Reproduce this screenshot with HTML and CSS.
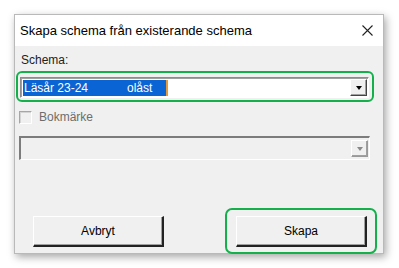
FILE: index.html
```html
<!DOCTYPE html>
<html lang="sv">
<head>
  <meta charset="UTF-8">
  <title>Skapa schema</title>
  <link rel="stylesheet" href="styles.css">
</head>
<body>
  <div class="dialog">
    <div class="titlebar">
      <span class="title">Skapa schema från existerande schema</span>
      <svg class="close" width="11" height="11" viewBox="0 0 11 11">
        <path d="M0.5 0.5 L10.5 10.5 M10.5 0.5 L0.5 10.5" stroke="#222" stroke-width="1.1" fill="none"/>
      </svg>
    </div>
    <div class="content">
      <div class="label">Schema:</div>
      <div class="highlight">
        <div class="combo">
          <span class="selected"><span class="year">Läsår 23-24</span><span>olåst</span></span>
          <span class="drop"><span class="arrow"></span></span>
        </div>
      </div>
      <div class="check-row">
        <span class="checkbox"></span>
        <span class="check-label">Bokmärke</span>
      </div>
      <div class="combo disabled">
        <span class="drop"><span class="arrow"></span></span>
      </div>
      <div class="buttons">
        <div class="btn-wrap"><button class="btn">Avbryt</button></div>
        <div class="btn-wrap highlight-btn"><button class="btn">Skapa</button></div>
      </div>
    </div>
  </div>
</body>
</html>
```

FILE: styles.css
```css
* {
  margin: 0;
  padding: 0;
  box-sizing: border-box;
}
body {
  background: #fff;
  font-family: 'Liberation Sans', Arial, sans-serif;
  font-size: 12px;
  color: #000;
  padding: 14px 15px 14px 14px;
}
.dialog {
  width: 370px;
  height: 240px;
  background: #f0f0f0;
  border: 1px solid #b9b9b9;
  box-shadow: 2px 3px 8px rgba(0, 0, 0, 0.35);
  display: flex;
  flex-direction: column;
}
.titlebar {
  height: 31px;
  background: #fff;
  display: flex;
  align-items: center;
  justify-content: space-between;
  padding: 0 10px 0 5px;
}
.title {
  font-size: 13px;
  color: #000;
}
.content {
  flex: 1;
  padding: 7px 0 0 1px;
  display: flex;
  flex-direction: column;
}
.label {
  padding-left: 5px;
  height: 15px;
  line-height: 15px;
  color: #222;
}
.highlight {
  margin-top: 3px;
  width: 358px;
  height: 31px;
  border: 2.5px solid #14b04c;
  border-radius: 6px;
  padding: 4px 0 0 2px;
}
.combo {
  width: 349px;
  height: 21px;
  background: #fff;
  border-top: 1px solid #8d8d8d;
  border-left: 1px solid #8d8d8d;
  border-bottom: 1px solid #fff;
  border-right: 1px solid #fff;
  box-shadow: inset 1px 1px 0 #a0a0a0;
  display: flex;
  align-items: center;
  justify-content: space-between;
  padding: 1px 1px 1px 2px;
}
.selected {
  background: #0a64d4;
  color: #fff;
  width: 145px;
  height: 16px;
  line-height: 16px;
  font-size: 12px;
  padding-left: 1px;
  border-right: 2px solid #e59a3c;
  display: flex;
  white-space: nowrap;
}
.year {
  width: 103px;
  flex-shrink: 0;
}
.drop {
  width: 17px;
  height: 17px;
  background: #f0f0f0;
  border-top: 1px solid #fff;
  border-left: 1px solid #fff;
  border-right: 1px solid #444;
  border-bottom: 1px solid #444;
  box-shadow: inset -1px -1px 0 #a0a0a0;
  display: flex;
  align-items: center;
  justify-content: center;
}
.arrow {
  width: 0;
  height: 0;
  border-left: 3.5px solid transparent;
  border-right: 3.5px solid transparent;
  border-top: 4px solid #000;
}
.check-row {
  margin-top: 8px;
  padding-left: 3px;
  height: 14px;
  display: flex;
  align-items: center;
  gap: 7px;
}
.checkbox {
  width: 13px;
  height: 13px;
  border-top: 1px solid #a6a6a6;
  border-left: 1px solid #a6a6a6;
  border-right: 1px solid #fff;
  border-bottom: 1px solid #fff;
  box-shadow: inset 1px 1px 0 #d4d4d4;
}
.check-label {
  color: #6d6d6d;
}
.combo.disabled {
  margin: 12px 0 0 3px;
  width: 351px;
  height: 24px;
  background: #f0f0f0;
  border-top: 2px solid #7c7c7c;
  border-left: 2px solid #7c7c7c;
  box-shadow: none;
  justify-content: flex-end;
}
.combo.disabled .drop {
  border-right-color: #999;
  border-bottom-color: #999;
}
.combo.disabled .arrow {
  border-top-color: #8a8a8a;
}
.buttons {
  margin-top: auto;
  height: 45px;
  display: flex;
  justify-content: space-between;
  padding: 0 6px 0 17px;
}
.btn-wrap {
  padding-top: 8px;
}
.highlight-btn {
  width: 152px;
  height: 46px;
  border: 2.5px solid #14b04c;
  border-radius: 7px;
  padding: 6px 0 0 9px;
}
.btn {
  width: 131px;
  height: 31px;
  background: #f0f0f0;
  font-family: 'Liberation Sans', Arial, sans-serif;
  font-size: 12px;
  color: #000;
  border-top: 1px solid #fff;
  border-left: 1px solid #fff;
  border-right: 2px solid #222;
  border-bottom: 2px solid #222;
  box-shadow: inset -1px -1px 0 #a0a0a0;
}
```
